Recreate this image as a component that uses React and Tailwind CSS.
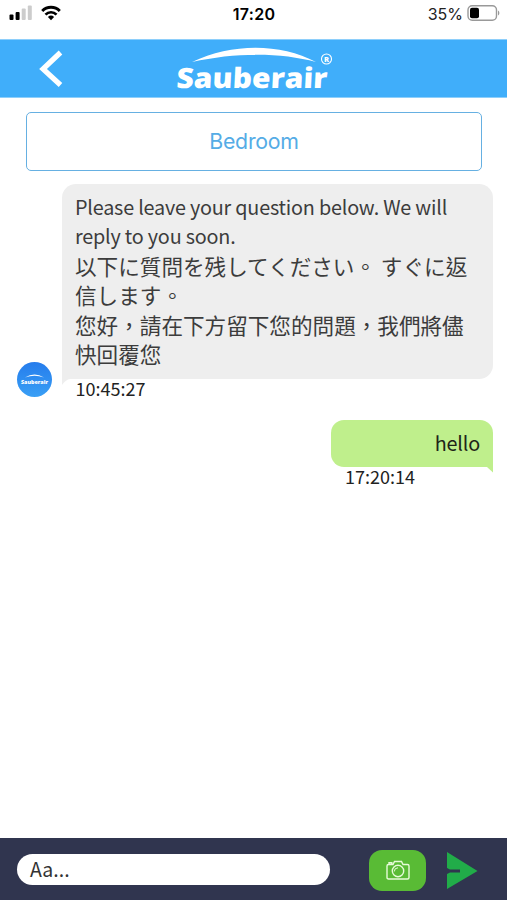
import React from "react";

function StatusBar() {
  return (
    <div className="flex h-[39px] items-start justify-between pl-[9px] pr-[7px] font-[Inter,sans-serif] text-black">
      {/* Signal + Wifi */}
      <div className="flex w-[140px] items-start gap-[8px] pt-[5px]">
        <svg width="24" height="16" viewBox="0 0 24 16">
          <rect x="0.5" y="9.5" width="4" height="5.5" rx="1" fill="#000" />
          <rect x="6.6" y="7" width="4" height="8" rx="1" fill="#000" />
          <rect x="12.7" y="3.5" width="4" height="11.5" rx="1" fill="#ccc" />
          <rect x="18.8" y="0.5" width="4" height="14.5" rx="1" fill="#ccc" />
        </svg>
        <svg width="20" height="16" viewBox="0 0 20 16">
          <path d="M1.2 6a12.3 12.3 0 0 1 17.6 0" fill="none" stroke="#000" strokeWidth="2.9" />
          <path d="M4.5 9.6a7.6 7.6 0 0 1 11 0" fill="none" stroke="#000" strokeWidth="2.7" />
          <path d="M6.9 12a4.5 4.5 0 0 1 6.2 0L10 15.2z" fill="#000" />
        </svg>
      </div>

      <div className="-ml-[1px] pt-[5px] text-[16px] leading-[18px] font-semibold tracking-[0.3px]">17:20</div>

      {/* Battery */}
      <div className="flex w-[140px] items-start justify-end gap-[4px] pt-[5px]">
        <span className="text-[16px] leading-[18px] text-[#222]">35%</span>
        <svg width="33" height="16" viewBox="0 0 33 16">
          <rect x="1" y="0.8" width="28.5" height="14.4" rx="4.2" fill="none" stroke="#999" strokeWidth="1.4" />
          <rect x="3" y="2.8" width="9" height="10.4" rx="2" fill="#000" />
          <path d="M31 5.5c1.8.7 1.8 4.3 0 5z" fill="#999" />
        </svg>
      </div>
    </div>
  );
}

function Logo() {
  return (
    <svg className="h-[57px] w-[164px] overflow-visible" viewBox="0 0 164 57" fill="#fff">
      <path d="M16 22C56 3 104 3 140 22C106 12.5 60 12 16 22z" />
      <text
        x="1"
        y="48"
        fontFamily="Open Sans, sans-serif"
        fontSize="28"
        fontWeight="800"
        textLength="151"
        lengthAdjust="spacingAndGlyphs"
        transform="translate(0 48) skewX(-3) translate(-1 -48)"
      >
        Sauberair
      </text>
      <circle cx="150.5" cy="19" r="5" fill="none" stroke="#fff" strokeWidth="1.1" />
      <text x="150.6" y="21.8" textAnchor="middle" fontFamily="Open Sans, sans-serif" fontSize="7.5" fontWeight="800">
        R
      </text>
    </svg>
  );
}

function Avatar() {
  return (
    <div className="mb-[4px] h-[35px] w-[35px] shrink-0 rounded-full bg-linear-to-b from-[#267cec] to-[#399ff5]">
      <svg width="35" height="35" viewBox="0 0 35 35" fill="#fff">
        <path d="M8 15.5Q17.5 9.5 27 15.5Q17.5 12 8 15.5z" />
        <text x="4" y="21.5" fontFamily="Open Sans, sans-serif" fontSize="5.5" fontWeight="800" textLength="27" lengthAdjust="spacingAndGlyphs">
          Sauberair
        </text>
      </svg>
    </div>
  );
}

export default function App() {
  return (
    <div className="flex h-[900px] w-[507px] flex-col overflow-hidden bg-white font-['Noto_Sans_CJK_TC',sans-serif]">
      <StatusBar />

      {/* Header */}
      <header className="grid h-[59px] shrink-0 grid-cols-[176px_164px_1fr] items-start border-t border-b border-[#8ecffb] bg-[#40aefa]">
        <svg className="mt-[10px] ml-[39px]" width="24" height="38" viewBox="0 0 24 38">
          <path d="M21.5 2.5L4 19L21.5 35" fill="none" stroke="#fff" strokeWidth="5.2" />
        </svg>
        <Logo />
      </header>

      {/* Device */}
      <button className="mt-[14px] mr-[25px] ml-[26px] h-[59px] shrink-0 rounded-[5px] border-[1.5px] border-[#66b0e2] text-[21.3px] tracking-[-0.25px] text-[#55ace6] font-[Inter,sans-serif]">
        Bedroom
      </button>

      {/* Messages */}
      <main className="flex flex-1 flex-col pt-[13px] pr-[14px] pl-[17px]">
        <div className="flex items-end">
          <Avatar />
          <div className="ml-[10px] flex-1">
            <div className="relative h-[195px] rounded-[14px] rounded-bl-none bg-[#eee] pt-[7.5px] pl-[13px] text-[21.6px] leading-[29.6px] text-[#3c3c3c]">
              <p className="text-[19.8px] tracking-[-0.2px] whitespace-nowrap">
                Please leave your question below. We will
                <br />
                reply to you soon.
              </p>
              <p className="whitespace-nowrap">
                以下に質問を残してください。 すぐに返
                <br />
                信します。
                <br />
                您好，請在下方留下您的問題，我們將儘
                <br />
                快回覆您
              </p>
              <svg className="absolute top-full left-0" width="10" height="7" viewBox="0 0 10 7">
                <path d="M0 0H8Q4 0.5 0 6z" fill="#eee" />
              </svg>
            </div>
            <div className="h-[22px] pl-[13.5px] text-[18px] leading-[19px] text-[#222]">10:45:27</div>
          </div>
        </div>

        <div className="mt-[19px] w-[162px] self-end">
          <div className="relative h-[47px] rounded-[13px] rounded-br-none bg-[#bfef8c] pr-[13px] text-right text-[19.8px] leading-[45px] tracking-[-0.19px] text-[#1d2418]">
            hello
            <svg className="absolute top-full right-0" width="8" height="6" viewBox="0 0 8 6">
              <path d="M2 0H8V5.5Z" fill="#bfef8c" />
            </svg>
          </div>
          <div className="pl-[14px] text-[18px] leading-[19px] text-[#222]">17:20:14</div>
        </div>
      </main>

      {/* Input bar */}
      <footer className="flex h-[62px] shrink-0 items-start bg-[#30354f] pl-[17px]">
        <div className="mt-[16px] h-[31px] w-[313px] rounded-full bg-white pl-[13px] text-[19.5px] leading-[29px] text-[#333]">
          Aa...
        </div>
        <button className="mt-[12px] ml-[39px] flex h-[41px] w-[57px] items-center justify-center rounded-[13px] bg-[#59bb35]">
          <svg width="24" height="21" viewBox="0 0 24 21" fill="none" stroke="#e6fbd8" strokeWidth="1.4">
            <path d="M2.5 4.5H7L8.5 1.5H15.5L17 4.5H21.5Q23 4.5 23 6V17.5Q23 19 21.5 19H2.5Q1 19 1 17.5V6Q1 4.5 2.5 4.5zM3 4V2.8H5.8V4" />
            <circle cx="12" cy="11" r="5.7" />
            <path d="M8.3 11.5a3.7 3.7 0 0 1 3.7-3.7" strokeWidth="1" />
          </svg>
        </button>
        <svg className="mt-[14px] ml-[19.5px]" width="32" height="38" viewBox="0 0 32 38">
          <path d="M1 0L31.5 19L1 37V22L4 20.5H14V17.5H4L1 16z" fill="#21ac49" />
        </svg>
      </footer>
    </div>
  );
}
